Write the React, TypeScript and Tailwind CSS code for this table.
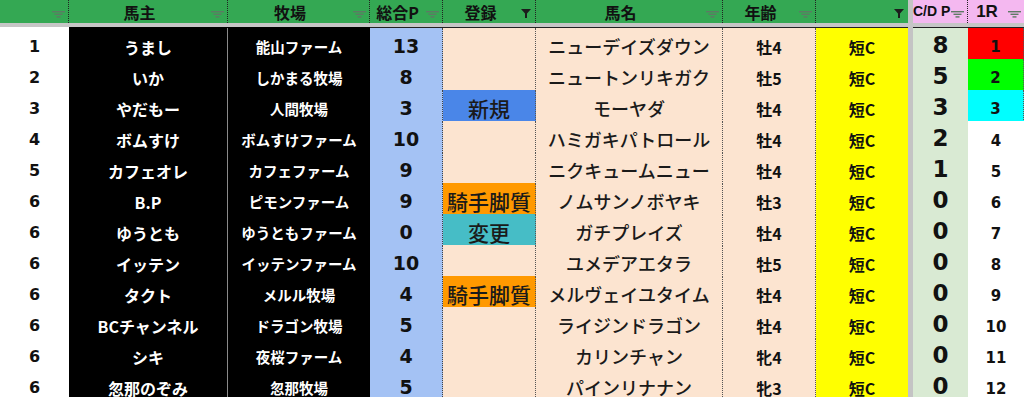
import React from "react"

type Row = [string, string, string, string, string, string, string, string, string, string]

const rows: Row[] = [
  ["1", "うまし", "能山ファーム", "13", "", "ニューデイズダウン", "牡4", "短C", "8", "1"],
  ["2", "いか", "しかまる牧場", "8", "", "ニュートンリキガク", "牡5", "短C", "5", "2"],
  ["3", "やだもー", "人間牧場", "3", "新規", "モーヤダ", "牡4", "短C", "3", "3"],
  ["4", "ボムすけ", "ボムすけファーム", "10", "", "ハミガキパトロール", "牡4", "短C", "2", "4"],
  ["5", "カフェオレ", "カフェファーム", "9", "", "ニクキュームニュー", "牡4", "短C", "1", "5"],
  ["6", "B.P", "ピモンファーム", "9", "騎手脚質", "ノムサンノボヤキ", "牡3", "短C", "0", "6"],
  ["6", "ゆうとも", "ゆうともファーム", "0", "変更", "ガチプレイズ", "牡4", "短C", "0", "7"],
  ["6", "イッテン", "イッテンファーム", "10", "", "ユメデアエタラ", "牡5", "短C", "0", "8"],
  ["6", "タクト", "メルル牧場", "4", "騎手脚質", "メルヴェイユタイム", "牡4", "短C", "0", "9"],
  ["6", "BCチャンネル", "ドラゴン牧場", "5", "", "ライジンドラゴン", "牡4", "短C", "0", "10"],
  ["6", "シキ", "夜桜ファーム", "4", "", "カリンチャン", "牝4", "短C", "0", "11"],
  ["6", "忽那のぞみ", "忽那牧場", "5", "", "パインリナナン", "牝3", "短C", "0", "12"],
]

const cols = "grid grid-cols-[69px_159px_142px_73px_93px_187px_93px_92px_60px_56px]"

const tagColor: Record<string, string> = {
  新規: "bg-[#4a86e8]",
  騎手脚質: "bg-[#ff9900]",
  変更: "bg-[#46bdc6]",
}

const placeColor: Record<string, string> = {
  "1": "bg-[#ff0000] border-b border-r border-dotted border-[#555]",
  "2": "bg-[#00ff00] border-b border-r border-dotted border-[#555]",
  "3": "bg-[#00ffff] border-b border-r border-dotted border-[#555]",
}

function FilterIcon() {
  return (
    <svg width="13" height="7" viewBox="0 0 13 7" className="absolute right-[3px] top-[11px]">
      <rect x="0" y="0" width="13" height="1.4" fill="#5d7a64" />
      <rect x="2.5" y="2.6" width="8" height="1.4" fill="#5d7a64" />
      <rect x="4.5" y="5.2" width="4" height="1.4" fill="#5d7a64" />
    </svg>
  )
}

function ActiveFilter() {
  return (
    <svg width="10" height="9" viewBox="0 0 10 9" className="absolute right-[4px] top-[9px]">
      <path d="M0 0 H10 L6 4.5 V9 H4 V4.5 Z" fill="#1c1c1c" />
    </svg>
  )
}

function Head({ label, active, className }: { label: string; active?: boolean; className: string }) {
  return (
    <div
      className={`relative flex h-[23px] items-center justify-center pr-[17px] text-[16px] font-bold text-[#111] border-r border-dotted border-[#222] ${className}`}
    >
      {label}
      {active ? <ActiveFilter /> : <FilterIcon />}
    </div>
  )
}

export default function App() {
  return (
    <div className="h-[397px] w-[1024px] overflow-hidden bg-white font-['Noto_Sans_CJK_JP',sans-serif]">
      <div className={cols}>
        <Head label="" className="bg-[#34a853]" />
        <Head label="馬主" className="bg-[#34a853]" />
        <Head label="牧場" className="bg-[#34a853]" />
        <Head label="総合P" className="bg-[#34a853]" />
        <Head label="登録" active className="bg-[#34a853]" />
        <Head label="馬名" className="bg-[#34a853]" />
        <Head label="年齢" className="bg-[#34a853]" />
        <Head label="" active className="bg-[#34a853] border-r-0" />
        <div className="relative flex h-[23px] items-center border-l-[5px] border-r border-solid [border-right-style:dotted] border-l-[#c4c4c4] border-r-[#222] bg-[#f4b8f0] font-['Liberation_Sans',sans-serif] text-[14px] font-bold text-[#111]">
          C/D P
          <FilterIcon />
        </div>
        <div className="relative flex h-[23px] items-center justify-center bg-[#f4b8f0] pr-[18px] font-['Liberation_Sans',sans-serif] text-[17px] font-bold text-[#111]">
          1R
          <FilterIcon />
        </div>
      </div>

      <div className="h-[4px] bg-[#c6c6c6]" />

      <div className={cols}>
        <div className="h-px bg-white" />
        <div className="h-px bg-black" />
        <div className="h-px bg-black" />
        <div className="h-px bg-[#222]" />
        <div className="h-px bg-[#222]" />
        <div className="h-px bg-[#222]" />
        <div className="h-px bg-[#222]" />
        <div className="h-px bg-[#222]" />
        <div className="h-px border-l-[5px] border-[#c4c4c4] bg-[#222]" />
        <div className="h-px bg-[#222]" />
      </div>

      {rows.map((r, i) => (
        <div key={i} className={`${cols} h-[31px]`}>
          <div className="flex items-center justify-center border-b border-[#d6d6d6] bg-white pt-[1px] font-['DejaVu_Sans',sans-serif] text-[16px] font-bold text-[#111]">
            {r[0]}
          </div>
          <div className="flex items-center justify-center border-b border-r border-[#8a8a8a] bg-black pt-[1px] text-[16px] font-bold text-white">
            {r[1]}
          </div>
          <div className="flex items-center justify-center border-b border-[#8a8a8a] bg-black pt-[2px] text-[14.5px] font-bold text-white">
            {r[2]}
          </div>
          <div className="flex items-center justify-center border-b border-r border-solid [border-right-style:dotted] border-b-[#8ea8d4] border-r-[#444] bg-[#a4c2f4] font-['DejaVu_Sans',sans-serif] text-[19px] font-bold text-[#111]">
            {r[3]}
          </div>
          <div
            className={`flex items-center justify-center border-b border-r border-dotted border-[#555] text-[21px] font-medium text-[#1a1a1a] ${tagColor[r[4]] ?? "bg-[#fce4d0]"}`}
          >
            {r[4]}
          </div>
          <div className="flex items-center justify-center border-b border-r border-dotted border-[#555] bg-[#fce4d0] text-[18px] font-medium text-[#1a1a1a]">
            {r[5]}
          </div>
          <div className="flex items-center justify-center border-b border-r border-dotted border-[#555] bg-[#fce4d0] pt-[1px] text-[16px] font-bold text-[#111]">
            {r[6]}
          </div>
          <div className="flex items-center justify-center border-b border-dotted border-[#555] bg-[#ffff00] pt-[1px] text-[16px] font-bold text-[#111]">
            {r[7]}
          </div>
          <div className="flex items-center justify-center border-l-[5px] border-[#c4c4c4] bg-[#d9ead3] pb-[3px] font-['DejaVu_Sans',sans-serif] text-[23px] font-bold text-[#111]">
            {r[8]}
          </div>
          <div
            className={`flex items-center justify-center pt-[2px] font-['DejaVu_Sans',sans-serif] text-[15px] font-semibold text-[#111] ${placeColor[r[9]] ?? "bg-white"}`}
          >
            {r[9]}
          </div>
        </div>
      ))}
    </div>
  )
}
